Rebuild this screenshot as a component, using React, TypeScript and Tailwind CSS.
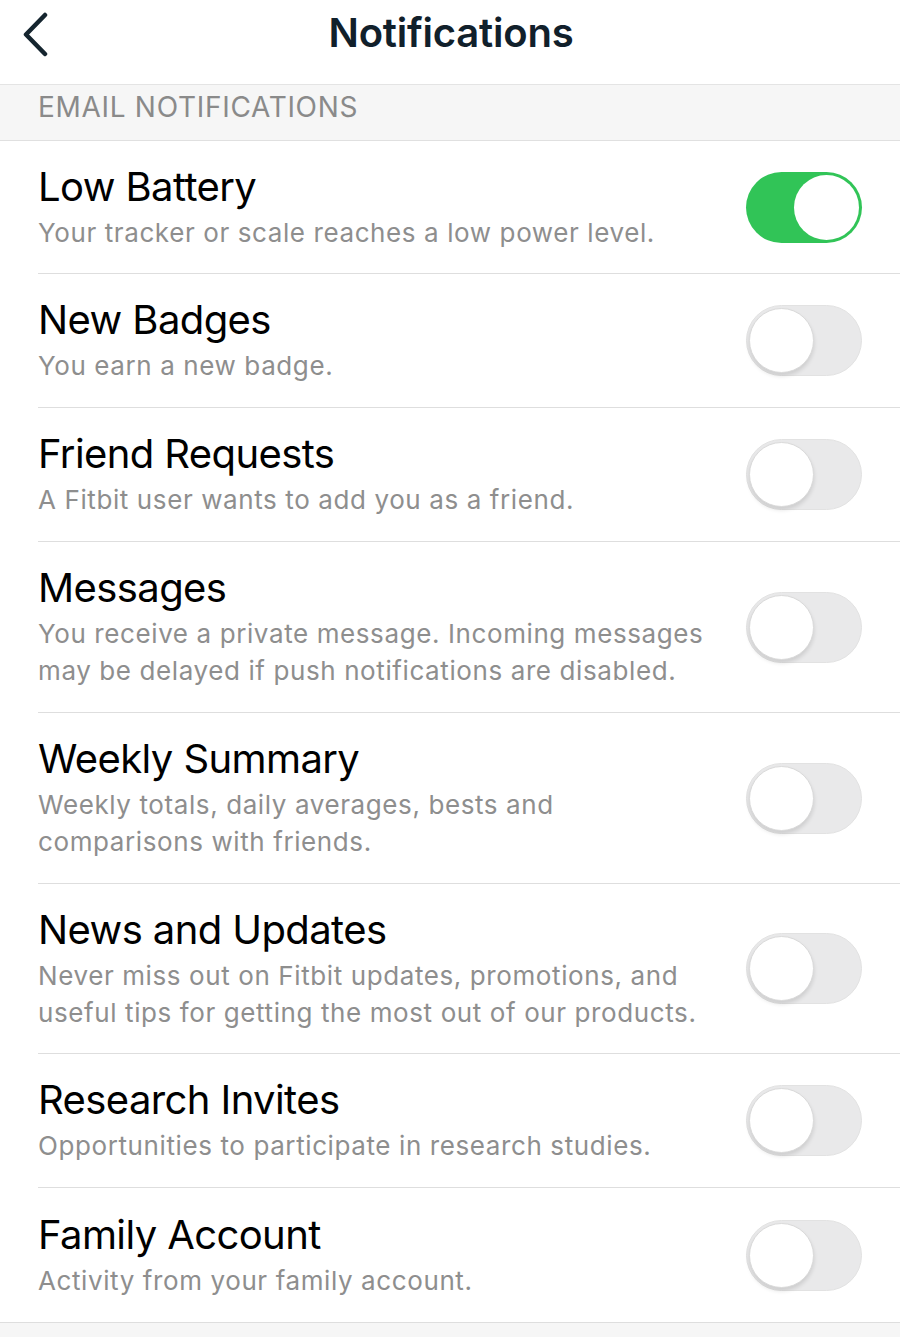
import React from "react";

type Row = { title: string; lines: string[]; on?: boolean; h: string };

const rows: Row[] = [
  { title: "Low Battery", lines: ["Your tracker or scale reaches a low power level."], on: true, h: "h-[133px]" },
  { title: "New Badges", lines: ["You earn a new badge."], h: "h-[134px]" },
  { title: "Friend Requests", lines: ["A Fitbit user wants to add you as a friend."], h: "h-[134px]" },
  {
    title: "Messages",
    lines: ["You receive a private message. Incoming messages", "may be delayed if push notifications are disabled."],
    h: "h-[171px]",
  },
  { title: "Weekly Summary", lines: ["Weekly totals, daily averages, bests and", "comparisons with friends."], h: "h-[171px]" },
  {
    title: "News and Updates",
    lines: ["Never miss out on Fitbit updates, promotions, and", "useful tips for getting the most out of our products."],
    h: "h-[170px]",
  },
  { title: "Research Invites", lines: ["Opportunities to participate in research studies."], h: "h-[134px]" },
  { title: "Family Account", lines: ["Activity from your family account."], h: "h-[134px]" },
];

function Toggle({ on }: { on?: boolean }) {
  if (on) {
    return (
      <div className="flex h-[71px] w-[116px] shrink-0 items-center justify-end rounded-full bg-[#31c457] p-[3px]">
        <div className="h-[65px] w-[65px] rounded-full bg-white" />
      </div>
    );
  }
  return (
    <div className="flex h-[71px] w-[116px] shrink-0 items-center justify-start rounded-full border border-[#e2e2e2] bg-[#e9e9ea] p-[2px]">
      <div className="h-[65px] w-[65px] rounded-full border border-[#dadada] bg-white shadow-[0_3px_4px_rgba(0,0,0,0.12)]" />
    </div>
  );
}

export default function App() {
  return (
    <div
      className="min-h-[1337px] w-[900px] bg-[#f6f6f6]"
      style={{ fontFamily: "Inter, 'Noto Sans', sans-serif" }}
    >
      <div className="relative flex h-[85px] items-center justify-center border-b border-[#e4e4e4] bg-white">
        <svg
          className="absolute left-[20px] top-[12px]"
          width="32"
          height="46"
          viewBox="0 0 32 46"
          fill="none"
        >
          <path d="M25 3 L6 22.5 L25 42" stroke="#15252f" strokeWidth="4.5" strokeLinecap="round" strokeLinejoin="round" />
        </svg>
        <div className="mb-[18px] ml-[2px] text-[40px] font-semibold tracking-[-0.2px] text-[#11202b]">Notifications</div>
      </div>
      <div className="flex h-[56px] items-center border-b border-[#e0e0e0] bg-[#f6f6f6] pl-[38px] pb-[12px]">
        <span className="text-[28px] tracking-[0.7px] text-[#8a8a8a]">EMAIL NOTIFICATIONS</span>
      </div>
      <div className="bg-white">
        {rows.map((r, i) => (
          <div key={r.title} className={i === rows.length - 1 ? "border-b border-[#dedede]" : ""}>
            <div
              className={
                "ml-[38px] flex items-center pr-[38px] " +
                (i === rows.length - 1 ? "" : "border-b border-[#dedede] ") +
                r.h
              }
            >
              <div className="flex-1">
                <div className="whitespace-nowrap text-[40px] leading-[46px] tracking-[-0.6px] text-black">{r.title}</div>
                <div className="mt-[4px] text-[26px] leading-[37px] tracking-[0.6px] text-[#8e8e8e]">
                  {r.lines.map((l) => (
                    <div key={l} className="whitespace-nowrap">
                      {l}
                    </div>
                  ))}
                </div>
              </div>
              <Toggle on={r.on} />
            </div>
          </div>
        ))}
      </div>
    </div>
  );
}
